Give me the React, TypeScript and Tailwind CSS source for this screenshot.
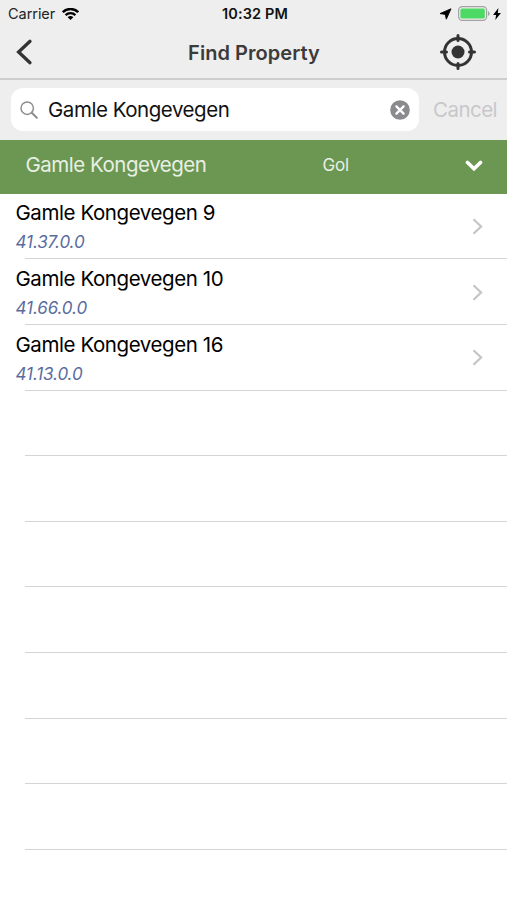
type Property = {
  address: string;
  cadastre: string;
};

const properties: Property[] = [
  { address: "Gamle Kongevegen 9", cadastre: "41.37.0.0" },
  { address: "Gamle Kongevegen 10", cadastre: "41.66.0.0" },
  { address: "Gamle Kongevegen 16", cadastre: "41.13.0.0" },
];

const EMPTY_ROWS = 7;

export default function App() {
  return (
    <div className="flex h-screen w-full flex-col overflow-hidden bg-white font-['Inter',sans-serif] text-black">
      <header className="h-20 shrink-0 border-b-2 border-[#cdcdcd] bg-[#eeeeee]">
        <StatusBar />
        <NavBar />
      </header>
      <SearchBar value="Gamle Kongevegen" />
      <SectionHeader street="Gamle Kongevegen" municipality="Gol" />
      <ul>
        {properties.map((property) => (
          <PropertyRow key={property.cadastre} property={property} />
        ))}
        {Array.from({ length: EMPTY_ROWS }, (_, i) => (
          <li key={i} className="ml-[25px] h-[65.6px] border-b border-[#d5d5d7]" />
        ))}
      </ul>
    </div>
  );
}

function StatusBar() {
  return (
    <div className="grid h-[27px] grid-cols-3 items-center pr-[6px] pl-2">
      <div className="flex items-center gap-[7px]">
        <span className="pt-px text-[14.5px] leading-none tracking-[-0.05px] text-[#222]">
          Carrier
        </span>
        <WifiIcon />
      </div>
      <span className="pt-px pl-px text-center text-[14.5px] leading-none font-semibold tracking-[0.1px] whitespace-nowrap text-[#111]">
        10:32 PM
      </span>
      <div className="flex items-center justify-end">
        <svg width="13" height="12" viewBox="0 0 13 12" className="mr-[6px]">
          <path
            d="M12 .8 7.3 11.2 6.3 6.4 1 5.6Z"
            fill="#000"
            stroke="#000"
            strokeWidth=".9"
            strokeLinejoin="round"
          />
        </svg>
        <BatteryIcon />
        <svg width="8" height="12" viewBox="0 0 8 12" className="ml-[3px]">
          <path d="M5.4 0 .1 6.9h3L2.3 12l5.6-7.1H4.8Z" fill="#000" />
        </svg>
      </div>
    </div>
  );
}

function NavBar() {
  return (
    <div className="grid h-[50px] grid-cols-3 items-center">
      <svg width="18" height="28" viewBox="0 0 18 28" fill="none" className="ml-[15px]">
        <path
          d="M15 3.3 3.6 14 15 24.7"
          stroke="#333"
          strokeWidth="3.3"
          strokeLinecap="round"
          strokeLinejoin="miter"
        />
      </svg>
      <h1 className="pt-px pl-px text-center text-[20px] leading-none font-semibold tracking-[0.05px] whitespace-nowrap text-[#3b3b3b]">
        Find Property
      </h1>
      <svg
        width="36"
        height="36"
        viewBox="0 0 36 36"
        fill="none"
        stroke="#333"
        className="mr-[31px] justify-self-end"
      >
        <circle cx="18" cy="18" r="13.5" strokeWidth="3" />
        <circle cx="18" cy="18" r="6.5" fill="#333" stroke="none" />
        <path d="M18 1.5v5M18 29.5v5M1.5 18h5M29.5 18h5" strokeWidth="3" strokeLinecap="round" />
      </svg>
    </div>
  );
}

function SearchBar({ value }: { value: string }) {
  return (
    <div className="flex h-[60px] shrink-0 items-center bg-[#eeeeef] pr-[10px] pb-px pl-[11px]">
      <div className="flex h-[43px] w-[408px] items-center rounded-[12px] bg-white pr-[9px] pl-[9px]">
        <svg width="18" height="18" viewBox="0 0 18 18" fill="none" stroke="#8e8e93">
          <circle cx="7.2" cy="7.2" r="6.2" strokeWidth="1.5" />
          <path d="m11.8 11.8 5 5" strokeWidth="2" strokeLinecap="round" />
        </svg>
        <span className="ml-[10px] flex-1 pt-px text-[20.5px] leading-none tracking-[-0.46px] whitespace-nowrap text-[#111]">
          {value}
        </span>
        <svg width="20" height="20" viewBox="0 0 20 20" fill="none">
          <circle cx="10" cy="10" r="9.8" fill="#8b8b8f" />
          <path
            d="m6.4 6.4 7.2 7.2M13.6 6.4l-7.2 7.2"
            stroke="#fff"
            strokeWidth="2.3"
            strokeLinecap="round"
          />
        </svg>
      </div>
      <span className="ml-auto pt-px text-[20.5px] leading-none tracking-[-0.55px] text-[#c8c8ca]">
        Cancel
      </span>
    </div>
  );
}

function SectionHeader({
  street,
  municipality,
}: {
  street: string;
  municipality: string;
}) {
  return (
    <div className="flex h-[53.5px] shrink-0 items-center bg-[#6c9752] pr-[24px] pb-[3px] pl-[25.5px] leading-none text-[#e8efe4]">
      <span className="w-[297px] text-[20.5px] tracking-[-0.48px] whitespace-nowrap">
        {street}
      </span>
      <span className="text-[17px] tracking-[-0.2px]">{municipality}</span>
      <svg width="18" height="12" viewBox="0 0 18 12" fill="none" className="mt-px ml-auto">
        <path d="m2.5 2.5 6.5 6.3 6.5-6.3" stroke="#fff" strokeWidth="3.6" strokeLinecap="round" />
      </svg>
    </div>
  );
}

function PropertyRow({ property }: { property: Property }) {
  return (
    <li className="flex h-[65.7px] flex-col">
      <div className="flex flex-1 items-center justify-between pr-[24px] pl-[15.5px]">
        <div className="pt-[4px]">
          <p className="text-[20.5px] leading-[30px] tracking-[-0.42px] whitespace-nowrap">
            {property.address}
          </p>
          <p className="text-[17px] leading-[29px] tracking-[-0.1px] text-[#5a6c9e] italic">
            {property.cadastre}
          </p>
        </div>
        <svg width="11" height="17" viewBox="0 0 11 17" fill="none" className="mt-px">
          <path d="m1.5 1.2 7.6 7.3-7.6 7.3" stroke="#c5c5c9" strokeWidth="2.2" />
        </svg>
      </div>
      <div className="ml-[25px] h-px bg-[#d5d5d7]" />
    </li>
  );
}

function WifiIcon() {
  return (
    <svg width="17" height="12" viewBox="0 0 17 12" fill="none" stroke="#000">
      <path d="M.8 4.2a11 11 0 0 1 15.4 0" strokeWidth="2.5" />
      <path d="M3.6 7.1a7 7 0 0 1 9.8 0" strokeWidth="2.3" />
      <path d="M8.5 12 5.7 9.2a3.9 3.9 0 0 1 5.6 0Z" fill="#000" stroke="none" />
    </svg>
  );
}

function BatteryIcon() {
  return (
    <svg width="32" height="15" viewBox="0 0 32 15" fill="none">
      <rect x=".6" y=".6" width="28" height="13.8" rx="3.6" stroke="#a3a3a3" strokeWidth="1.2" />
      <rect x="2.4" y="2.4" width="24.4" height="10.2" rx="1.6" fill="#4cd964" />
      <path d="M30 5.2c2.2.6 2.2 4 0 4.6Z" fill="#a3a3a3" />
    </svg>
  );
}
